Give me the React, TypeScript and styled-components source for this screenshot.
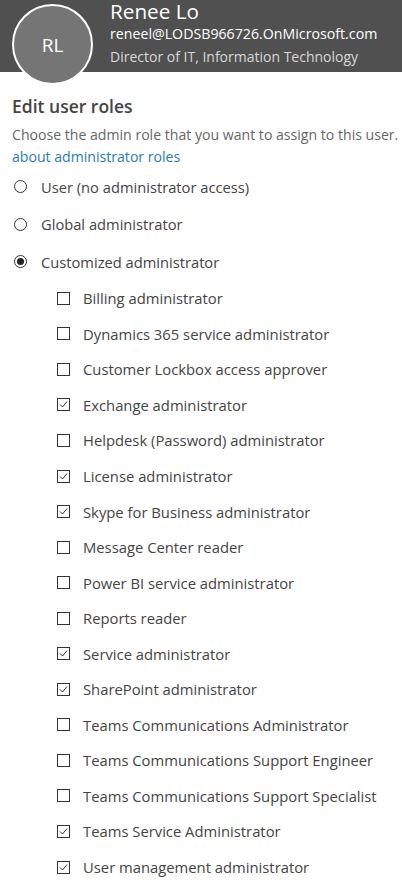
import React from 'react';
import styled, { createGlobalStyle } from 'styled-components';

const GlobalStyle = createGlobalStyle`
  body {
    margin: 0;
    background: #ffffff;
    font-family: "Open Sans", "Liberation Sans", sans-serif;
  }
`;

const Page = styled.div`
  width: 402px;
  height: 887px;
  overflow: hidden;
  background: #ffffff;
`;

const Header = styled.div`
  height: 72px;
  background: #505050;
  display: flex;
  align-items: flex-start;
  padding-left: 12px;
`;

const Avatar = styled.div`
  flex: none;
  width: 77px;
  height: 77px;
  margin-top: 4px;
  border-radius: 50%;
  border: 2px solid #ffffff;
  background: #757575;
  color: #ffffff;
  font-size: 19px;
  display: flex;
  align-items: center;
  justify-content: center;
  position: relative;
  z-index: 1;
`;

const Identity = styled.div`
  display: flex;
  flex-direction: column;
  margin-left: 17px;
`;

const Name = styled.div`
  color: #ffffff;
  font-size: 20.7px;
  line-height: 22px;
`;

const Email = styled.div`
  color: #ffffff;
  font-size: 14.2px;
  line-height: 20px;
  margin-top: 2px;
`;

const JobTitle = styled.div`
  color: #d8d8d8;
  font-size: 14px;
  line-height: 22px;
  margin-top: 2px;
`;

const Body = styled.div`
  padding: 22px 0 0 12px;
`;

const SectionTitle = styled.h2`
  margin: 0;
  font-size: 17.5px;
  font-weight: 600;
  color: #444444;
  line-height: 24px;
`;

const Description = styled.p`
  margin: 6px 0 0;
  font-size: 14.1px;
  color: #666666;
  line-height: 22px;
  white-space: nowrap;
`;

const Link = styled.a`
  display: block;
  font-size: 14.1px;
  color: #2a7ab8;
  line-height: 22px;
  text-decoration: none;
`;

const OptionRow = styled.div<{ $indent?: boolean }>`
  display: flex;
  align-items: center;
  height: ${p => (p.$indent ? '35.55px' : '37.5px')};
  padding-left: ${p => (p.$indent ? '45px' : '2px')};
  font-size: ${p => (p.$indent ? '14.8px' : '14.7px')};
  color: #444444;
  white-space: nowrap;
`;

const RadioDot = styled.span<{ $on?: boolean }>`
  flex: none;
  width: 11px;
  height: 11px;
  border-radius: 50%;
  border: 1px solid #333333;
  margin-right: 14px;
  display: flex;
  align-items: center;
  justify-content: center;
  &::after {
    content: '';
    width: 7px;
    height: 7px;
    border-radius: 50%;
    background: ${p => (p.$on ? '#222222' : 'transparent')};
  }
`;

const Box = styled.span`
  flex: none;
  width: 11px;
  height: 11px;
  border: 1px solid #333333;
  margin-right: 13px;
  display: flex;
  align-items: center;
  justify-content: center;
`;

const Options = styled.div`
  margin-top: 0;
`;

const radios = [
  { label: 'User (no administrator access)', on: false },
  { label: 'Global administrator', on: false },
  { label: 'Customized administrator', on: true },
];

const roles: [string, boolean][] = [
  ['Billing administrator', false],
  ['Dynamics 365 service administrator', false],
  ['Customer Lockbox access approver', false],
  ['Exchange administrator', true],
  ['Helpdesk (Password) administrator', false],
  ['License administrator', true],
  ['Skype for Business administrator', true],
  ['Message Center reader', false],
  ['Power BI service administrator', false],
  ['Reports reader', false],
  ['Service administrator', true],
  ['SharePoint administrator', true],
  ['Teams Communications Administrator', false],
  ['Teams Communications Support Engineer', false],
  ['Teams Communications Support Specialist', false],
  ['Teams Service Administrator', true],
  ['User management administrator', true],
];

const Check = () => (
  <svg width="9" height="9" viewBox="0 0 9 9">
    <path d="M1 4.5 L3.5 7 L8 1.5" fill="none" stroke="#333" strokeWidth="1" />
  </svg>
);

const App = () => (
  <Page>
    <GlobalStyle />
    <Header>
      <Avatar>RL</Avatar>
      <Identity>
        <Name>Renee Lo</Name>
        <Email>reneel@LODSB966726.OnMicrosoft.com</Email>
        <JobTitle>Director of IT, Information Technology</JobTitle>
      </Identity>
    </Header>
    <Body>
      <SectionTitle>Edit user roles</SectionTitle>
      <Description>Choose the admin role that you want to assign to this user.</Description>
      <Link href="#">about administrator roles</Link>
      <Options>
        {radios.map(r => (
          <OptionRow key={r.label}>
            <RadioDot $on={r.on} />
            {r.label}
          </OptionRow>
        ))}
        {roles.map(([label, on]) => (
          <OptionRow key={label} $indent>
            <Box>{on && <Check />}</Box>
            {label}
          </OptionRow>
        ))}
      </Options>
    </Body>
  </Page>
);

export default App;
